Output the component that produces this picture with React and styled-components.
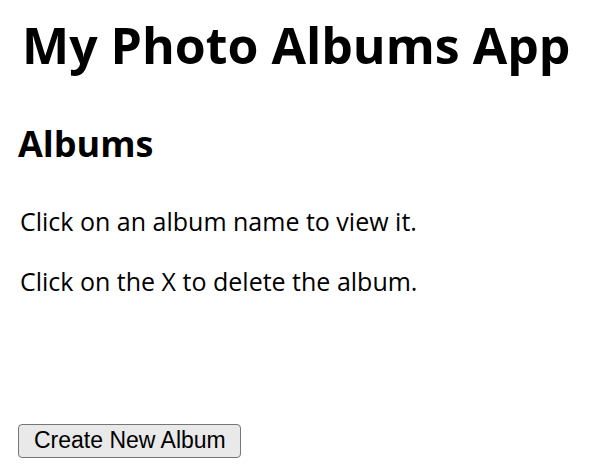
import styled, { createGlobalStyle } from 'styled-components'

const GlobalStyle = createGlobalStyle`
    body {
        margin: 0;
        background: #ffffff;
        color: #000000;
        font-family: 'Open Sans', 'Noto Sans', sans-serif;
    }
`;

const Page = styled.div`
    padding: 0 20px;
`;

const Title = styled.h1`
    font-size: 50px;
    line-height: 56px;
    font-weight: 700;
    margin: 17px 0 0 2px;
`;

const Heading = styled.h2`
    font-size: 36px;
    line-height: 44px;
    font-weight: 700;
    margin: 49px 0 0 -2px;
`;

const Hint = styled.p`
    font-size: 25px;
    line-height: 32px;
    margin: ${props => props.first ? '39px' : '28px'} 0 0;
`;

const AlbumList = styled.ul`
    list-style: none;
    padding: 0;
    margin: 0;
    min-height: 127px;
`;

const CreateButton = styled.button`
    display: block;
    font-family: 'Liberation Sans', Arial, sans-serif;
    font-size: 23px;
    color: #000;
    background: #e9e9e9;
    border: 1.5px solid #767676;
    border-radius: 4px;
    padding: 2px 14px 3px 15px;
    height: 34px;
    margin-left: -2px;
`;

const App = () => {
    return (
        <>
            <GlobalStyle />
            <Page>
                <Title>My Photo Albums App</Title>
                <Heading>Albums</Heading>
                <Hint first>Click on an album name to view it.</Hint>
                <Hint>Click on the X to delete the album.</Hint>
                <AlbumList />
                <CreateButton>Create New Album</CreateButton>
            </Page>
        </>
    )
}

export default App
